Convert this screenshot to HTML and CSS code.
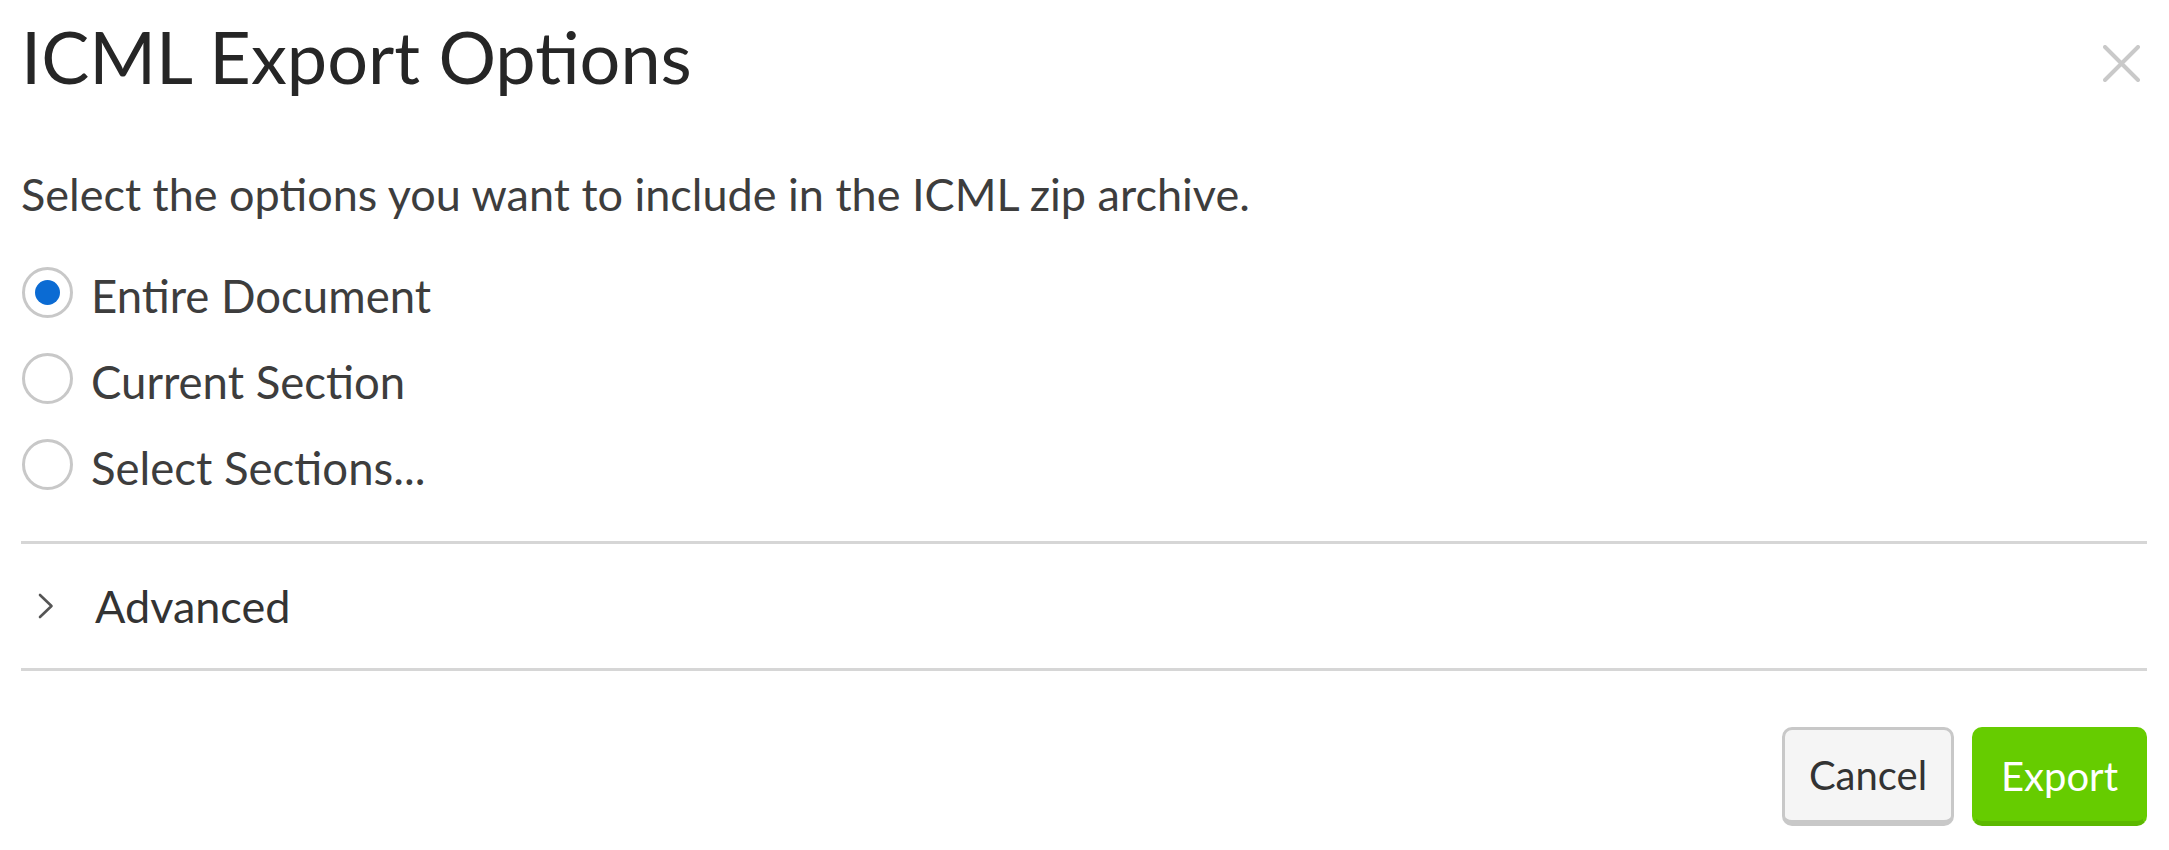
FILE: index.html
```html
<!DOCTYPE html>
<html lang="en">
<head>
<meta charset="utf-8">
<title>ICML Export Options</title>
<link rel="stylesheet" href="styles.css">
</head>
<body>
<div class="dialog" role="dialog" aria-labelledby="dlg-title">
  <header class="dialog-header">
    <h2 id="dlg-title" class="dialog-title">ICML Export Options</h2>
    <button class="close-btn" type="button" aria-label="Close">
      <svg viewBox="0 0 37 37" width="37" height="37" aria-hidden="true">
        <path d="M2 2 L35 35 M35 2 L2 35" stroke="#c9c9c9" stroke-width="4" stroke-linecap="round" fill="none"/>
      </svg>
    </button>
  </header>

  <p class="intro">Select the options you want to include in the ICML zip archive.</p>

  <div class="options">
    <label class="option">
      <input type="radio" name="scope" class="radio" checked>
      <span>Entire Document</span>
    </label>
    <label class="option">
      <input type="radio" name="scope" class="radio">
      <span>Current Section</span>
    </label>
    <label class="option">
      <input type="radio" name="scope" class="radio">
      <span>Select Sections...</span>
    </label>
  </div>

  <div class="advanced">
    <svg class="chevron" viewBox="0 0 16 26" width="16" height="26" aria-hidden="true">
      <path d="M2 2 L13.5 13 L2 24" stroke="#555" stroke-width="2.6" fill="none" stroke-linecap="round" stroke-linejoin="round"/>
    </svg>
    <span class="advanced-label">Advanced</span>
  </div>

  <footer class="dialog-footer">
    <button class="btn btn-cancel" type="button">Cancel</button>
    <button class="btn btn-export" type="button">Export</button>
  </footer>
</div>
</body>
</html>
```
FILE: styles.css
```css
html, body {
  margin: 0;
  padding: 0;
  background: #ffffff;
}

body {
  font-family: Lato, "Open Sans", "Liberation Sans", sans-serif;
  color: #3d3d3d;
}

.dialog {
  padding: 14px 22px 0 21px;
}

.dialog-header {
  display: flex;
  justify-content: space-between;
  align-items: flex-start;
}

.dialog-title {
  margin: 0;
  font-size: 72px;
  font-weight: 400;
  line-height: 85px;
  color: #262626;
}

.close-btn {
  background: none;
  border: 0;
  padding: 0;
  margin: 31px 7px 0 0;
  width: 37px;
  height: 37px;
  cursor: pointer;
}

.close-btn svg {
  display: block;
}

.intro {
  margin: 68px 0 0;
  font-size: 45px;
  line-height: 54px;
}

.options {
  display: flex;
  flex-direction: column;
  margin-top: 28px;
}

.option {
  display: flex;
  align-items: center;
  height: 86px;
  gap: 18px;
  font-size: 45.5px;
  line-height: 54px;
  cursor: pointer;
}

.option span {
  margin-top: 7px;
}

.radio {
  appearance: none;
  -webkit-appearance: none;
  margin: 0 0 0 1px;
  width: 51px;
  height: 51px;
  border: 3px solid #c8c8c8;
  border-radius: 50%;
  background: #fff;
  box-sizing: border-box;
  display: grid;
  place-items: center;
  flex: none;
}

.radio:checked::after {
  content: "";
  width: 25px;
  height: 25px;
  border-radius: 50%;
  background: #0b6bd3;
}

.advanced {
  margin-top: 34px;
  border-top: 3px solid #d6d6d6;
  border-bottom: 3px solid #d6d6d6;
  height: 124px;
  display: flex;
  align-items: center;
}

.chevron {
  margin-left: 17px;
  margin-top: -1px;
  flex: none;
}

.advanced-label {
  margin-left: 41px;
  font-size: 45px;
  line-height: 54px;
  color: #333;
}

.dialog-footer {
  display: flex;
  justify-content: flex-end;
  gap: 18px;
  margin-top: 56px;
}

.btn {
  font-family: inherit;
  font-size: 40px;
  line-height: 48px;
  height: 99px;
  box-sizing: border-box;
  border-radius: 10px;
  cursor: pointer;
}

.btn-cancel {
  width: 172px;
  background: #f5f5f5;
  color: #333;
  border: 3px solid #c8c8c8;
  border-bottom-width: 6px;
}

.btn-export {
  width: 175px;
  background: #66cc00;
  color: #fff;
  border: 3px solid #66cc00;
  border-bottom: 5px solid #5cb800;
}
```
